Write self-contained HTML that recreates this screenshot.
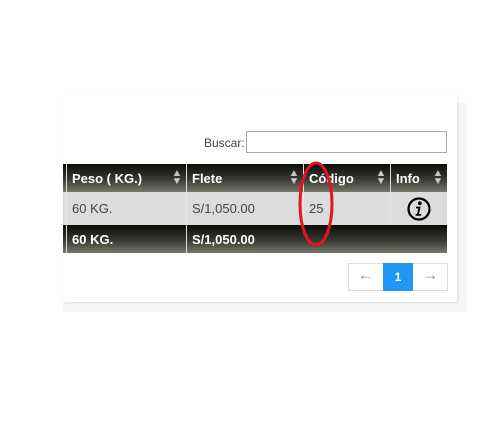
<!DOCTYPE html><html><head><style>
body{margin:0;width:501px;height:428px;background:#fff;font-family:"Liberation Sans",sans-serif;position:relative;overflow:hidden}
.sh{position:absolute;left:63px;top:103px;width:404px;height:209px;background:#f6f6f6}
.card{position:absolute;left:63px;top:95px;width:394px;height:207px;background:#fff;box-shadow:1px 1px 2px rgba(0,0,0,.1)}
.a{position:absolute}
.hd{background:linear-gradient(#0c0c0a,#3a3a32 55%,#76766a);color:#fff;font-weight:bold;font-size:13px}
.c{position:absolute;top:0;height:100%;display:flex;align-items:center;padding-left:5px;box-sizing:border-box;border-left:1px solid #ddd}
.s{position:absolute;right:4px;top:6px;font-size:10px;line-height:8px;color:#c8c8c8;transform:scaleX(1.1)}
.row{background:#dcdcdc;color:#444;font-size:13px}
</style></head><body>
<div class="sh"></div><div class="card"></div>
<div class="a" style="left:204px;top:136px;font-size:12px;color:#444">Buscar:</div>
<div class="a" style="left:246px;top:131px;width:199px;height:20px;border:1px solid #aaa;background:#fff"></div>
<div class="a hd" style="left:63px;top:164px;width:384px;height:28px">
<div class="c" style="left:3px;width:120px">Peso ( KG.)<span class="s">▲<br>▼</span></div>
<div class="c" style="left:123px;width:117px">Flete<span class="s">▲<br>▼</span></div>
<div class="c" style="left:240px;width:87px">Código<span class="s">▲<br>▼</span></div>
<div class="c" style="left:327px;width:57px">Info<span class="s">▲<br>▼</span></div>
</div>
<div class="a row" style="left:63px;top:192px;width:384px;height:33px">
<div class="c" style="left:3px;width:120px;border-color:#e4e4e4">60 KG.</div>
<div class="c" style="left:123px;width:117px;border-color:#e4e4e4">S/1,050.00</div>
<div class="c" style="left:240px;width:87px;border-color:#e4e4e4">25</div>
<div class="c" style="left:327px;width:57px;border-color:#e4e4e4;justify-content:center;padding:0">
<svg width="24" height="24" viewBox="0 0 24 24"><circle cx="12" cy="12" r="10.5" fill="none" stroke="#000" stroke-width="2.2"/><circle cx="12.8" cy="6.3" r="1.9"/><path d="M9 9.6h4.6l-1.6 7.4h2.2v1.8H8.6V17h1.5l1.2-5.6H9z"/></svg></div>
</div>
<div class="a hd" style="left:63px;top:225px;width:384px;height:28px">
<div class="c" style="left:3px;width:120px">60 KG.</div>
<div class="c" style="left:123px;width:117px">S/1,050.00</div>
</div>
<div class="a" style="left:348px;top:263px;width:98px;height:26px;border:1px solid #ddd;background:#fff"></div>
<div class="a" style="left:349px;top:265px;width:34px;text-align:center;color:#999;font-size:17px">←</div>
<div class="a" style="left:383px;top:263px;width:30px;height:28px;background:#2196f3;color:#fff;font-weight:bold;font-size:12px;text-align:center;line-height:28px">1</div>
<div class="a" style="left:413px;top:265px;width:34px;text-align:center;color:#999;font-size:17px">→</div>
<svg class="a" style="left:0;top:0" width="501" height="428"><ellipse cx="316" cy="204" rx="16" ry="41" fill="none" stroke="#e8141c" stroke-width="3"/></svg>
</body></html>
